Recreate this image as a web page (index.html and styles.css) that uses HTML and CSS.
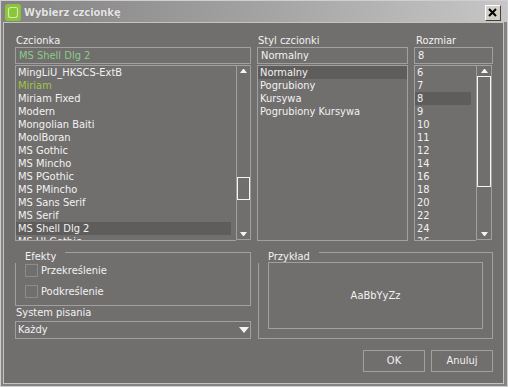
FILE: index.html
```html
<!DOCTYPE html>
<html lang="pl">
<head>
    <meta charset="UTF-8">
    <title>Wybierz czcionkę</title>
    <link rel="stylesheet" href="styles.css">
</head>
<body>
    <div class="window">
        <!-- Title bar -->
        <div class="titlebar">
            <svg class="app-icon" width="16" height="17" viewBox="0 0 16 17">
                <rect x="0" y="0" width="16" height="17" rx="3" fill="#8cc43c"/>
                <path d="M3.5 6 Q3.5 3.5 6 3.5 H11 Q12.5 3.5 12.5 5.5 V11 Q12.5 13.5 10 13.5 H5.5 Q3.5 13.5 3.5 11.5 Z" fill="none" stroke="#d2eca4" stroke-width="1.2"/>
            </svg>
            <span class="title">Wybierz czcionkę</span>
            <div class="close">
                <svg width="14" height="14" viewBox="0 0 14 14">
                    <path d="M3 3 L10 10 M10 3 L3 10" stroke="#000" stroke-width="2"/>
                </svg>
            </div>
        </div>

        <div class="client">
            <!-- Font / style / size pickers -->
            <div class="pickers">
                <div class="picker">
                    <div class="label">Czcionka</div>
                    <div class="field green">MS Shell Dlg 2</div>
                    <div class="listbox">
                        <ul class="items font-items">
                            <li>MingLiU_HKSCS-ExtB</li>
                            <li class="green-li">Miriam</li>
                            <li>Miriam Fixed</li>
                            <li>Modern</li>
                            <li>Mongolian Baiti</li>
                            <li>MoolBoran</li>
                            <li>MS Gothic</li>
                            <li>MS Mincho</li>
                            <li>MS PGothic</li>
                            <li>MS PMincho</li>
                            <li>MS Sans Serif</li>
                            <li>MS Serif</li>
                            <li class="selected">MS Shell Dlg 2</li>
                            <li>MS UI Gothic</li>
                        </ul>
                        <div class="scrollbar">
                            <div class="sb-btn"><span class="arrow-up"></span></div>
                            <div class="track"><div class="thumb font-thumb"></div></div>
                            <div class="sb-btn"><span class="arrow-down"></span></div>
                        </div>
                    </div>
                </div>

                <div class="picker">
                    <div class="label">Styl czcionki</div>
                    <div class="field">Normalny</div>
                    <div class="listbox">
                        <ul class="items style-items">
                            <li class="selected">Normalny</li>
                            <li>Pogrubiony</li>
                            <li>Kursywa</li>
                            <li>Pogrubiony Kursywa</li>
                        </ul>
                    </div>
                </div>

                <div class="picker">
                    <div class="label size-label">Rozmiar</div>
                    <div class="field">8</div>
                    <div class="listbox size-box">
                        <ul class="items size-items">
                            <li>6</li>
                            <li>7</li>
                            <li class="selected">8</li>
                            <li>9</li>
                            <li>10</li>
                            <li>11</li>
                            <li>12</li>
                            <li>14</li>
                            <li>16</li>
                            <li>18</li>
                            <li>20</li>
                            <li>22</li>
                            <li>24</li>
                            <li>26</li>
                        </ul>
                        <div class="scrollbar size-scroll">
                            <div class="sb-btn"><span class="arrow-up"></span></div>
                            <div class="track"><div class="thumb size-thumb"></div></div>
                            <div class="sb-btn"><span class="arrow-down"></span></div>
                        </div>
                    </div>
                </div>
            </div>

            <!-- Effects, script and sample -->
            <div class="lower">
                <div class="lower-left">
                    <div class="group effects">
                        <div class="group-title">Efekty</div>
                        <div class="check"><span class="box"></span>Przekreślenie</div>
                        <div class="check second"><span class="box"></span>Podkreślenie</div>
                    </div>
                    <div class="label script-label">System pisania</div>
                    <div class="field select">Każdy<span class="arrow-select"></span></div>
                </div>
                <div class="group sample">
                    <div class="group-title">Przykład</div>
                    <div class="preview">AaBbYyZz</div>
                </div>
            </div>

            <div class="buttons">
                <div class="button">OK</div>
                <div class="button">Anuluj</div>
            </div>
        </div>
    </div>
</body>
</html>
```

FILE: styles.css
```css
/* Dark skinned font dialog */
* {
    box-sizing: border-box;
}
body {
    margin: 0;
    font-family: "DejaVu Sans Condensed", "DejaVu Sans", sans-serif;
    font-size: 11px;
    color: #f2f2f2;
}
.window {
    width: 508px;
    height: 387px;
    border: 1px solid #cfcfcf;
    background: #858282;
    display: flex;
    flex-direction: column;
}

/* Title bar */
.titlebar {
    height: 21px;
    display: flex;
    align-items: flex-start;
    padding: 3px 6px 0 4px;
    background: linear-gradient(to right, #848282, #a3a2a2 50%, #c6c6c6);
}
.app-icon {
    display: block;
}
.title {
    margin-left: 3px;
    line-height: 17px;
    font-weight: bold;
    color: #e4e4e4;
    text-shadow: 0 0 1px #6b6b6b;
}
.close {
    margin: 1px 0 0 auto;
    width: 16px;
    height: 16px;
    background: #d4d0c8;
    border: 1px solid;
    border-color: #ffffff #404040 #404040 #ffffff;
    display: flex;
    align-items: center;
    justify-content: center;
}

/* Client area */
.client {
    flex: 1;
    margin: 0 3px 2px 2px;
    border: 1px solid #c3c3c3;
    background: #716e6e;
    padding: 12px 10px 0 11px;
}
.pickers {
    display: grid;
    grid-template-columns: 236px 151px 79px;
    column-gap: 6px;
}
.label {
    height: 12px;
    line-height: 12px;
    padding-left: 1px;
    white-space: nowrap;
}
.size-label {
    padding-left: 2px;
}
.field {
    height: 17px;
    line-height: 15px;
    border: 1px solid #a29f9f;
    padding-left: 3px;
    white-space: nowrap;
}
.green {
    color: #88cc88;
}

/* List boxes */
.listbox {
    display: flex;
    height: 176px;
    margin-top: 1px;
}
.items {
    flex: 1;
    margin: 0;
    padding: 0 5px 0 0;
    list-style-type: none;
    border: 1px solid #a29f9f;
    border-right: none;
    overflow: hidden;
}
.items li {
    height: 13px;
    line-height: 13px;
    padding-left: 2px;
    white-space: nowrap;
}
.items li.selected {
    background-color: #5f5c5c;
}
.items li.green-li {
    color: #9ec646;
}
.style-items {
    padding-right: 0;
    border-right: 1px solid #a29f9f;
}
.size-box {
    margin-right: 1px;
}

/* Scrollbars */
.scrollbar {
    width: 15px;
    height: 175px;
    border: 1px solid #a29f9f;
    display: flex;
    flex-direction: column;
}
.size-scroll {
    width: 16px;
}
.sb-btn {
    height: 10px;
    display: flex;
    align-items: center;
    justify-content: center;
}
.track {
    flex: 1;
}
.thumb {
    border: 1px solid #f4f4f4;
}
.font-thumb {
    margin-top: 101px;
    height: 23px;
}
.size-thumb {
    height: 111px;
}
.arrow-up {
    width: 1px;
    height: 0;
    border-left: 3px solid transparent;
    border-right: 3px solid transparent;
    border-bottom: 4px solid #f4f4f4;
    box-sizing: content-box;
}
.arrow-down {
    width: 1px;
    height: 0;
    border-left: 3px solid transparent;
    border-right: 3px solid transparent;
    border-top: 4px solid #f4f4f4;
    box-sizing: content-box;
}

/* Lower part */
.lower {
    display: grid;
    grid-template-columns: 236px 235px;
    column-gap: 7px;
    margin-top: 11px;
}
.group {
    border: 1px solid #a29f9f;
    display: flex;
    flex-direction: column;
}
.group-title {
    align-self: flex-start;
    margin: -3px 0 0 -1px;
    height: 13px;
    line-height: 13px;
    padding: 0 9px 0 10px;
    background: #716e6e;
}
.effects {
    height: 54px;
}
.check {
    display: flex;
    align-items: center;
    height: 14px;
    margin-left: 9px;
}
.check.second {
    margin-top: 7px;
}
.box {
    width: 13px;
    height: 13px;
    margin-right: 3px;
    border: 1px solid #8f8b8b;
}
.script-label {
    height: 15px;
    line-height: 14px;
    padding-left: 1px;
}
.select {
    height: 18px;
    line-height: 16px;
    padding: 0 1px 0 2px;
    display: flex;
    align-items: center;
    justify-content: space-between;
}
.arrow-select {
    width: 0;
    height: 0;
    border-left: 5px solid transparent;
    border-right: 5px solid transparent;
    border-top: 6px solid #f4f4f4;
}
.sample {
    height: 87px;
}
.preview {
    margin: -1px 9px 0 9px;
    height: 67px;
    border: 1px solid #a29f9f;
    display: flex;
    align-items: center;
    justify-content: center;
}

/* Dialog buttons */
.buttons {
    display: flex;
    justify-content: flex-end;
    gap: 6px;
    margin-top: 11px;
}
.button {
    width: 62px;
    height: 22px;
    line-height: 20px;
    text-align: center;
    border: 1px solid #a29f9f;
}
```
